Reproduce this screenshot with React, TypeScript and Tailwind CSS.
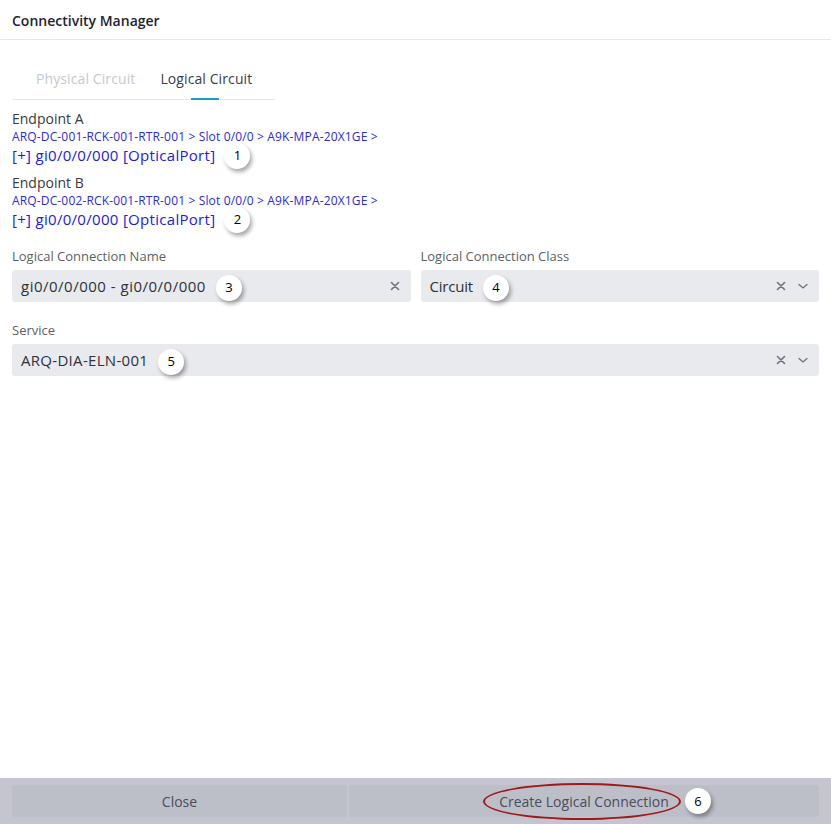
import React from 'react';

const font = { fontFamily: '"Open Sans", "Noto Sans", sans-serif' };

function Badge({ n }: { n: number }) {
  return (
    <span className="inline-flex items-center justify-center w-[26px] h-[26px] rounded-full bg-white text-[13px] text-black shadow-[2px_3px_4px_rgba(0,0,0,0.35)] leading-none">
      {n}
    </span>
  );
}

function ClearIcon() {
  return (
    <svg width="10" height="10" viewBox="0 0 10 10" className="text-gray-500">
      <path d="M1.5 1.5 L8.5 8.5 M8.5 1.5 L1.5 8.5" stroke="currentColor" strokeWidth="1.6" strokeLinecap="round" />
    </svg>
  );
}

function ChevronIcon() {
  return (
    <svg width="10" height="7" viewBox="0 0 10 7" className="text-gray-500">
      <path d="M1 1.5 L5 5 L9 1.5" stroke="currentColor" strokeWidth="1.3" fill="none" strokeLinecap="round" />
    </svg>
  );
}

function Endpoint({ label, path, badge }: { label: string; path: string; badge: number }) {
  return (
    <div className="flex flex-col">
      <div className="text-[14px] text-[#3a3a3a] leading-[20px]">{label}</div>
      <div className="text-[12px] text-[#2b2bd6] leading-[16px] tracking-[0.15px]">{path}</div>
      <div className="flex items-center gap-[9px] h-[20px]">
        <span className="text-[15px] text-[#2020e0] leading-[20px] tracking-[0.3px]">[+] gi0/0/0/000 [OpticalPort]</span>
        <span className="mt-[1px]"><Badge n={badge} /></span>
      </div>
    </div>
  );
}

function Field({ label, value, badge, dropdown, className, valueClass }: { label: string; value: string; badge: number; dropdown?: boolean; className?: string; valueClass?: string }) {
  return (
    <div className={`flex flex-col ${className ?? ''}`}>
      <div className="text-[13px] text-[#5b5f66] leading-[16px] mb-[6px]">{label}</div>
      <div className="h-[32px] bg-[#e8eaee] rounded-[3px] flex items-center pl-[9px] pr-[11px]">
        <span className={`text-[15px] text-[#2f3237] ${valueClass ?? ''}`}>{value}</span>
        <span className="ml-[10px] mt-[3px]"><Badge n={badge} /></span>
        <div className="ml-auto flex items-center gap-[12px]">
          <ClearIcon />
          {dropdown && <ChevronIcon />}
        </div>
      </div>
    </div>
  );
}

export default function App() {
  return (
    <div className="w-[831px] h-[824px] bg-white flex flex-col" style={font}>
      <header className="h-[40px] border-b border-[#e6e7ea] flex items-center px-[12px] pt-[2px]">
        <h1 className="text-[14px] font-semibold text-[#1e2430]">Connectivity Manager</h1>
      </header>

      <div className="flex-1 flex flex-col px-[12px]">
        <div className="flex w-[263px] border-b border-[#e4e6ea] mt-[28px] pl-[24px] gap-[25px]">
          <button className="text-[14px] text-[#c5c9d1] pb-[10px] tracking-[0.1px]">Physical Circuit</button>
          <button className="relative text-[14px] text-[#3a3d4a] pb-[10px] tracking-[0.1px]">
            Logical Circuit
            <span className="absolute left-[31px] bottom-[-1px] w-[28px] h-[2px] bg-[#1b9fca]" />
          </button>
        </div>

        <div className="flex flex-col gap-[8px] mt-[9px]">
          <Endpoint label="Endpoint A" path="ARQ-DC-001-RCK-001-RTR-001 > Slot 0/0/0 > A9K-MPA-20X1GE >" badge={1} />
          <Endpoint label="Endpoint B" path="ARQ-DC-002-RCK-001-RTR-001 > Slot 0/0/0 > A9K-MPA-20X1GE >" badge={2} />
        </div>

        <div className="grid grid-cols-2 gap-[10px] mt-[19px]">
          <Field label="Logical Connection Name" value="gi0/0/0/000 - gi0/0/0/000" badge={3} valueClass="tracking-[0.5px]" />
          <Field label="Logical Connection Class" value="Circuit" badge={4} dropdown valueClass="tracking-[-0.2px]" />
        </div>

        <Field className="mt-[20px]" label="Service" value="ARQ-DIA-ELN-001" badge={5} dropdown valueClass="tracking-[0.3px]" />
      </div>

      <footer className="h-[46px] bg-[#c4c5ce] flex items-center px-[12px] gap-[2px]">
        <button className="w-[335px] h-[32px] bg-[#bcbfc8] rounded-[3px] text-[14px] text-[#4a4d5a]">Close</button>
        <button className="relative flex-1 h-[32px] bg-[#bcbfc8] rounded-[3px] text-[14px] text-[#4a4d5a]">
          <span className="relative">
            Create Logical Connection
            <span className="absolute left-[-16px] right-[-12px] top-[-9px] bottom-[-9px] rounded-[50%] border-[2px] border-[#a01818]" />
          </span>
          <span className="absolute left-[336px] top-[3px]"><Badge n={6} /></span>
        </button>
      </footer>
    </div>
  );
}
